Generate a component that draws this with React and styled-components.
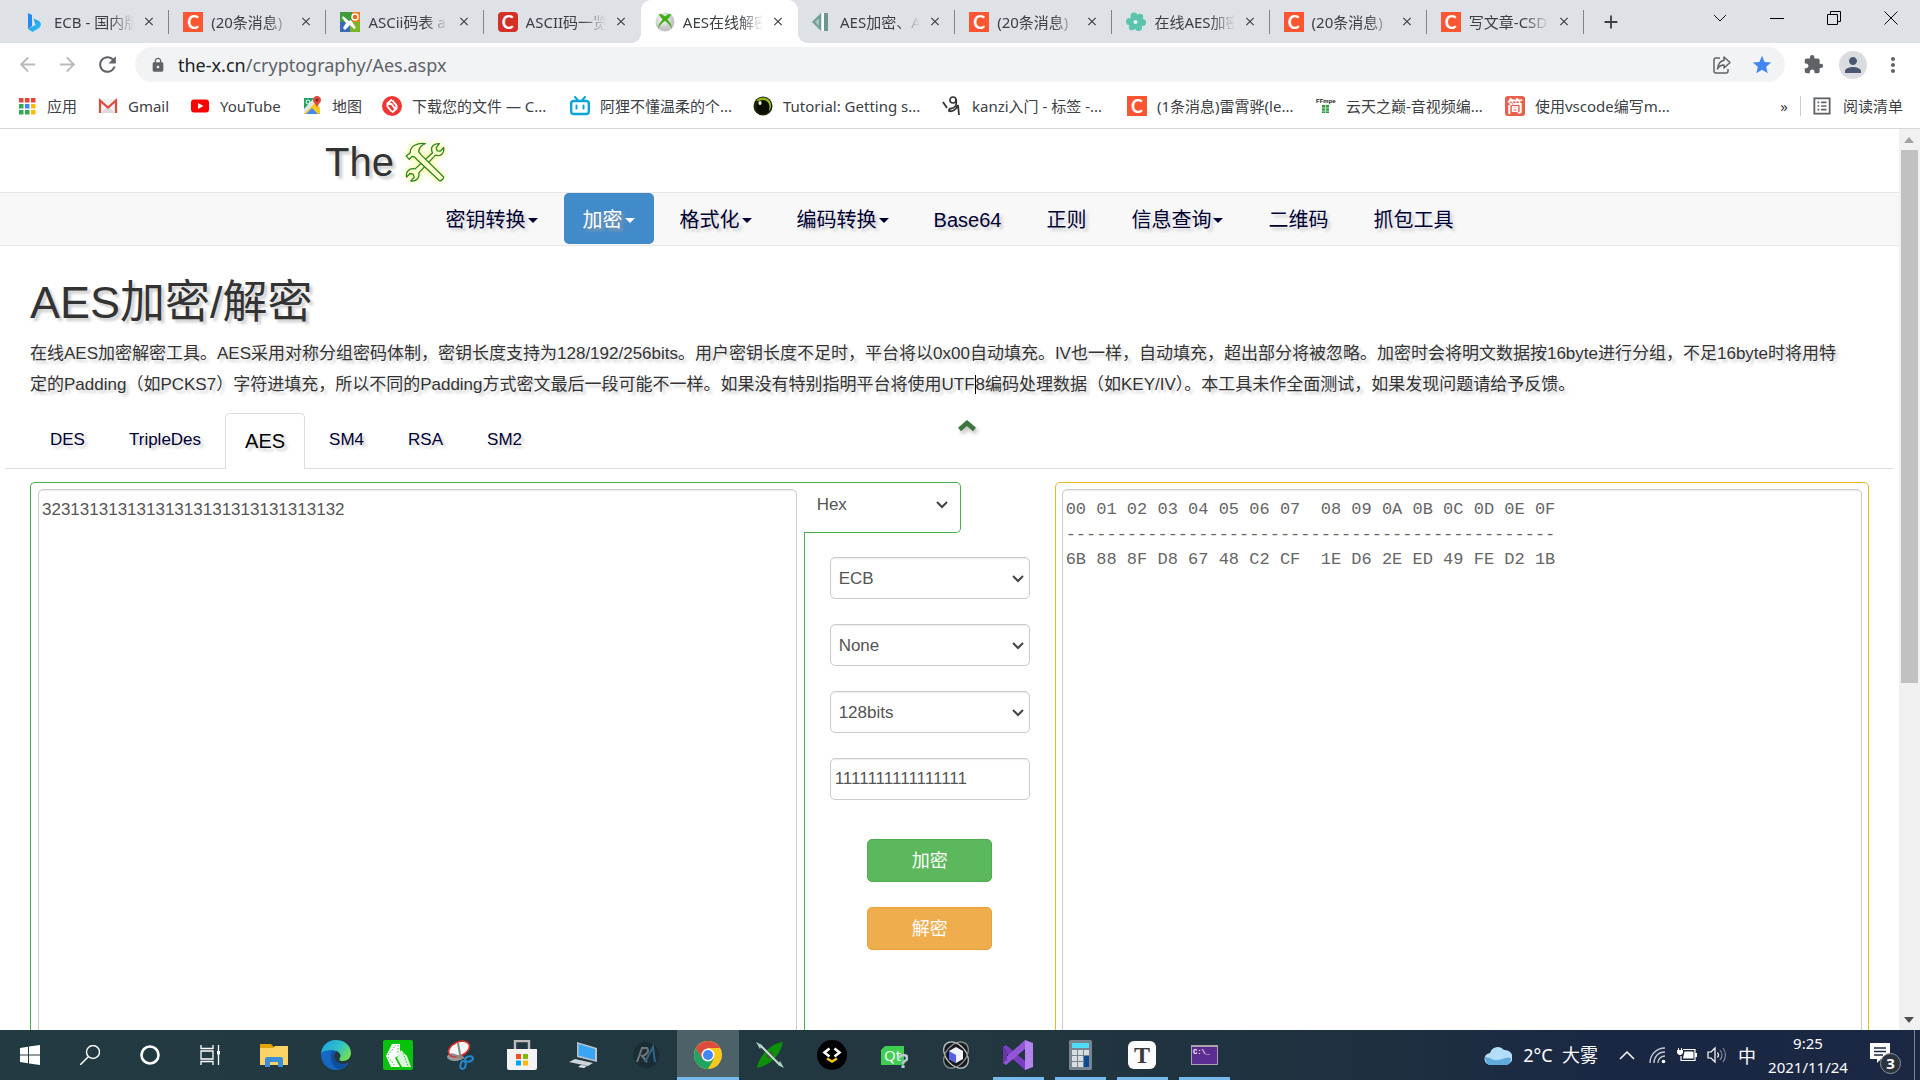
import React from 'react';
import styled, { createGlobalStyle, css } from 'styled-components';
import {
  MdArrowBack,
  MdArrowForward,
  MdRefresh,
  MdLock,
  MdStar,
  MdExtension,
  MdPerson,
  MdMoreVert,
  MdClose,
  MdAdd,
} from 'react-icons/md';

const uiFont = "'Noto Sans', 'Noto Sans CJK SC', sans-serif";
const pageFont = "'Liberation Sans', 'Noto Sans CJK SC', sans-serif";
const monoFont = "'Liberation Mono', 'Noto Sans CJK SC', monospace";
const textShadow = '3px 3px 3px #ccc';

const GlobalStyle = createGlobalStyle`
  * {
    box-sizing: border-box;
  }

  body {
    margin: 0;
    overflow: hidden;
    background: #fff;
  }

  button, input, select, textarea {
    font-family: inherit;
  }
`;

const Desktop = styled.div`
  display: flex;
  flex-direction: column;
  height: 100vh;
  font-family: ${uiFont};
`;

/* ---------- browser chrome ---------- */

const TabStrip = styled.div`
  display: flex;
  flex-shrink: 0;
  height: 43px;
  padding-left: 12px;
  background: #dee1e6;
`;

const BrowserTabs = styled.div`
  display: grid;
  grid-template-columns: repeat(10, 1fr);
  flex: 0 1 1572px;
  min-width: 0;
`;

const BrowserTab = styled.div`
  position: relative;
  display: flex;
  align-items: center;
  min-width: 0;
  padding: 0 13px 0 14px;
  gap: 8px;

  ${({ $divider }) => $divider && css`
    &::after {
      content: '';
      position: absolute;
      right: 0;
      top: 10px;
      width: 1px;
      height: 24px;
      background: #808387;
    }
  `}

  ${({ $active }) => $active && css`
    background: #fff;
    border-radius: 10px 10px 0 0;

    &::before, &::after {
      content: '';
      position: absolute;
      bottom: 0;
      width: 10px;
      height: 10px;
    }
    &::before {
      left: -10px;
      background: radial-gradient(circle at 0 0, transparent 10px, #fff 10px);
    }
    &::after {
      right: -10px;
      background: radial-gradient(circle at 100% 0, transparent 10px, #fff 10px);
    }
  `}
`;

const TabTitle = styled.span`
  flex: 1;
  min-width: 0;
  overflow: hidden;
  white-space: nowrap;
  font-size: 15px;
  line-height: 24px;
  color: #3c4043;
  mask-image: linear-gradient(to right, #000 70%, transparent 100%);
`;

const IconButton = styled.button`
  display: flex;
  align-items: center;
  justify-content: center;
  flex-shrink: 0;
  width: ${({ $width }) => $width || 40}px;
  height: ${({ $height }) => $height || 36}px;
  padding: 0;
  border: 0;
  background: none;
  color: ${({ $color }) => $color || '#5f6368'};
`;

const WindowControls = styled.div`
  display: flex;
  margin-left: auto;
  padding-right: 1px;
`;

const LetterIcon = styled.span`
  display: flex;
  align-items: center;
  justify-content: center;
  flex-shrink: 0;
  width: 20px;
  height: 20px;
  border-radius: ${({ $radius }) => $radius || 0}px;
  background: ${({ $bg }) => $bg || '#fc5531'};
  color: #fff;
  font-family: 'Lato', 'Noto Sans CJK SC', sans-serif;
  font-size: ${({ $size }) => $size || 18}px;
  font-weight: 700;
  line-height: 20px;
`;

const Toolbar = styled.div`
  display: flex;
  align-items: center;
  flex-shrink: 0;
  height: 43px;
  padding: 0 7px 0 7px;
`;

const AddressBar = styled.div`
  display: flex;
  align-items: center;
  flex: 1;
  height: 35px;
  margin: 0 8px 0 8px;
  padding: 0 3px 0 15px;
  border-radius: 18px;
  background: #f1f3f4;
`;

const Url = styled.span`
  flex: 1;
  margin-left: 12px;
  font-size: 18px;
  line-height: 24px;
  color: #5f6368;

  b {
    font-weight: 400;
    color: #202124;
  }
`;

const Avatar = styled.span`
  display: flex;
  align-items: center;
  justify-content: center;
  width: 28px;
  height: 28px;
  border-radius: 50%;
  background: #dadce0;
  color: #4a5872;
`;

const BookmarkBar = styled.div`
  display: flex;
  align-items: center;
  flex-shrink: 0;
  height: 43px;
  padding: 0 17px 2px 17px;
  border-bottom: 1px solid #d5d7da;
`;

const Bookmark = styled.a`
  display: flex;
  align-items: center;
  gap: 10px;
  margin-right: 21px;
  font-size: 15px;
  line-height: 24px;
  color: #3c4043;
  text-decoration: none;
  white-space: nowrap;

  span.label {
    width: ${({ $width }) => $width}px;
  }
`;

const ReadingList = styled.div`
  display: flex;
  align-items: center;
  margin-left: auto;
  gap: 12px;
  font-size: 15px;
  line-height: 24px;
  color: #3c4043;

  i {
    width: 1px;
    height: 20px;
    background: #c9ccd1;
  }
`;

/* ---------- web page ---------- */

const Viewport = styled.div`
  display: flex;
  flex: 1;
  min-height: 0;
`;

const Page = styled.main`
  flex: 1;
  min-width: 0;
  overflow: hidden;
  background: #fff;
  color: #333;
  font-family: ${pageFont};
  font-size: 17px;
`;

const Scrollbar = styled.div`
  display: flex;
  flex-direction: column;
  align-items: center;
  justify-content: space-between;
  width: 21px;
  padding-right: 1px;
  background: #f1f1f1;
`;

const ScrollTrack = styled.div`
  flex: 1;
  width: 17px;
`;

const ScrollThumb = styled.div`
  height: 62%;
  background: #c1c1c1;
`;

const ScrollArrow = styled.div`
  display: flex;
  align-items: center;
  justify-content: center;
  height: 21px;
`;

const Brand = styled.header`
  display: flex;
  align-items: center;
  gap: 10px;
  height: 63px;
  padding: 2px 0 0 325px;
  font-size: 40px;
  line-height: 46px;
  text-shadow: ${textShadow};
`;

const NavBar = styled.nav`
  display: flex;
  justify-content: center;
  gap: 7px;
  height: 54px;
  border: solid #e7e7e7;
  border-width: 1px 0;
  background: #f8f8f8;
`;

const NavLink = styled.a`
  display: flex;
  align-items: center;
  gap: 2px;
  height: 51px;
  padding: 2px 19px 0;
  border-radius: 5px;
  background: ${({ $active }) => ($active ? '#428bca' : 'transparent')};
  color: ${({ $active }) => ($active ? '#fff' : '#000033')};
  font-size: 20px;
  line-height: 28px;
  text-decoration: none;
  text-shadow: ${({ $active }) => ($active ? '3px 3px 3px #8a9aa8' : textShadow)};
`;

const Caret = styled.span`
  margin-top: 2px;
  border-top: 5px solid;
  border-left: 5px solid transparent;
  border-right: 5px solid transparent;
`;

const Intro = styled.section`
  padding: 32px 60px 0 30px;
  text-shadow: ${textShadow};

  h1 {
    margin: 0;
    font-size: 45px;
    font-weight: 400;
    line-height: 50px;
  }

  p {
    margin: 10px 0 0;
    line-height: 31px;
  }
`;

const TextCursor = styled.span`
  border-left: 1px solid #000;
`;

const CipherTabs = styled.div`
  display: flex;
  gap: 4px;
  margin: 13px 6px 0 5px;
  padding-left: 25px;
  border-bottom: 1px solid #ddd;
`;

const CipherTab = styled.a`
  height: 56px;
  margin-bottom: -1px;
  padding: 0 19px;
  border: 1px solid ${({ $active }) => ($active ? '#ddd' : 'transparent')};
  border-bottom: 0;
  border-radius: 5px 5px 0 0;
  background: ${({ $active }) => ($active ? '#fff' : 'transparent')};
  color: ${({ $active }) => ($active ? '#000' : '#000033')};
  font-size: ${({ $active }) => ($active ? 20 : 17)}px;
  line-height: ${({ $active }) => ($active ? 54 : 52)}px;
  text-decoration: none;
  text-shadow: ${textShadow};
`;

const CollapseButton = styled.button`
  height: 28px;
  margin-left: 412px;
  padding: 0;
  border: 0;
  background: none;
  filter: drop-shadow(2px 3px 2px #bbb);
`;

const Workspace = styled.section`
  display: grid;
  grid-template-columns: 19fr 251px 20fr;
  min-height: 620px;
  margin: 13px 30px 0 30px;
`;

const InputPanel = styled.div`
  display: flex;
  padding: 6px 7px 6px 7px;
  border: solid #4cae4c;
  border-width: 1px 0 1px 1px;
  border-radius: 5px 0 0 5px;
`;

const OutputPanel = styled.div`
  display: flex;
  padding: 6px;
  border: 1px solid #e6bb1a;
  border-radius: 5px;
`;

const TextArea = styled.textarea`
  flex: 1;
  min-width: 0;
  padding: 7px 3px;
  resize: none;
  outline: 0;
  border: 1px solid #ccc;
  border-radius: 5px;
  box-shadow: inset 0 1px 1px rgba(0, 0, 0, 0.08);
  background: #fff;
  color: ${({ $mono }) => ($mono ? '#666' : '#555')};
  font-family: ${({ $mono }) => ($mono ? monoFont : pageFont)};
  font-size: 17px;
  line-height: 25px;
`;

const Options = styled.div`
  display: flex;
  flex-direction: column;
`;

const FormatBox = styled.div`
  width: 157px;
  height: 51px;
  border: solid #4cae4c;
  border-width: 1px 1px 1px 0;
  border-radius: 0 5px 5px 0;
`;

const OptionList = styled.div`
  display: flex;
  flex: 1;
  flex-direction: column;
  gap: 25px;
  padding: 24px 25px;
  border-left: 1px solid #4cae4c;
`;

const SelectWrap = styled.div`
  position: relative;

  svg {
    position: absolute;
    top: 18px;
    right: ${({ $bare }) => ($bare ? 12 : 6)}px;
    pointer-events: none;
  }
`;

const fieldBox = css`
  display: block;
  width: 100%;
  height: 42px;
  border: 1px solid #ccc;
  border-radius: 5px;
  box-shadow: inset 0 1px 1px rgba(0, 0, 0, 0.08);
  outline: 0;
  background: #fff;
  color: #555;
  font-size: 17px;
`;

const Select = styled.select`
  ${fieldBox}
  appearance: none;
  padding: 0 8px;

  ${({ $bare }) => $bare && css`
    padding: 0 13px;
    border: 0;
    box-shadow: none;
    background: transparent;
  `}
`;

const KeyInput = styled.input`
  ${fieldBox}
  padding: 0 4px;
`;

const Actions = styled.div`
  display: flex;
  flex-direction: column;
  align-items: center;
  gap: 25px;
  padding-top: 14px;
`;

const ActionButton = styled.button`
  width: 125px;
  height: 43px;
  padding: 0 0 3px;
  border: 1px solid ${({ $border }) => $border};
  border-radius: 5px;
  background: ${({ $bg }) => $bg};
  color: #fff;
  font-size: 18px;
`;

/* ---------- taskbar ---------- */

const Taskbar = styled.footer`
  display: flex;
  flex-shrink: 0;
  height: 50px;
  background: linear-gradient(to right, #223a42 0%, #22373f 50%, #1e3040 72%, #1a2743 84%, #1b2844 100%);
  color: #fff;
`;

const TaskGroup = styled.div`
  display: flex;
  margin-right: 3px;
`;

const TaskButton = styled.button`
  display: flex;
  align-items: center;
  justify-content: center;
  width: ${({ $width }) => $width || 62}px;
  height: 50px;
  padding: 0;
  border: 0;
  background: ${({ $active }) => ($active ? '#4d6168' : 'none')};
  ${({ $active, $open }) => ($active || $open) && css`
    background-image: linear-gradient(#76b9ed, #76b9ed);
    background-size: ${$active ? '100%' : '51px'} 3px;
    background-position: bottom center;
    background-repeat: no-repeat;
  `}
`;

const Tray = styled.div`
  display: flex;
  align-items: center;
  margin-left: auto;
`;

const Weather = styled.div`
  display: flex;
  align-items: center;
  gap: 11px;
  margin-right: 14px;
  font-size: 18px;
  line-height: 24px;
`;

const TrayIcon = styled.span`
  display: flex;
  align-items: center;
  justify-content: center;
  width: 30px;
  font-size: 18px;
`;

const Clock = styled.div`
  display: flex;
  flex-direction: column;
  align-items: center;
  width: 92px;
  font-size: 15px;
  line-height: 24px;
`;

const Notifications = styled.div`
  position: relative;
  width: 45px;
  height: 24px;
  padding-left: 16px;
  margin-right: 15px;
`;

const Badge = styled.span`
  position: absolute;
  top: 10px;
  left: 26px;
  width: 21px;
  height: 21px;
  border: 1px solid #8c929c;
  border-radius: 50%;
  background: #2c333d;
  font-size: 15px;
  font-weight: 700;
  line-height: 19px;
  text-align: center;
`;

const ShowDesktop = styled.div`
  width: 6px;
  height: 50px;
  border-left: 1px solid #7a8496;
`;

/* ---------- small drawings ---------- */

const Svg = ({ s = 20, w, h, box = '0 0 20 20', children }) => (
  <svg width={w || s} height={h || s} viewBox={box} fill="none" aria-hidden="true">
    {children}
  </svg>
);

const BingIcon = () => (
  <Svg>
    <defs>
      <linearGradient id="bing" x1="0" y1="0" x2="1" y2="1">
        <stop offset="0" stopColor="#2a8cf0" />
        <stop offset="1" stopColor="#28c8e8" />
      </linearGradient>
    </defs>
    <path d="M2 1l4 2v11l-4 3z" fill="#2389f2" />
    <path d="M7.500 6.500l5 2.300c3 1.600 3 5.700.3 7.400L6.500 20 2 17l7.500-4z" fill="url(#bing)" />
  </Svg>
);

const PuzzleManIcon = () => (
  <Svg>
    <path d="M0 0h12v10H0z" fill="#3f9b3c" />
    <path d="M12 0h8v10h-8z" fill="#ef7d1a" />
    <path d="M0 10h10v10H0z" fill="#3c6ab4" />
    <path d="M10 10h10v10H10z" fill="#79b528" />
    <path d="M3 4l6 5 2-1 5 8-2 1-4-4-5 5-2-2 3-5-4-5z" fill="#fff" />
    <circle cx="15" cy="5" r="3" fill="#e96a12" stroke="#fff" strokeWidth="1.500" />
  </Svg>
);

const XboxIcon = () => (
  <Svg>
    <defs>
      <radialGradient id="ball" cx=".4" cy=".35">
        <stop offset="0" stopColor="#fff" />
        <stop offset="1" stopColor="#c4c4c4" />
      </radialGradient>
    </defs>
    <circle cx="10" cy="10" r="9.500" fill="url(#ball)" />
    <path d="M3.500 2C7 1.500 9 3.500 10 4.500c1-1 3-3 6.500-2.500C15 4 14 6 12.500 7.500c2.500 3 4.500 6 4.500 9.500-1.500-3.500-4-6-7-8-3 2-5.500 4.500-7 8 0-3.500 2-6.500 4.500-9.500C6 6 5 4 3.500 2z" fill="#3fae17" />
  </Svg>
);

const MirrorIcon = () => (
  <Svg>
    <path d="M9 1v18L0 10z" fill="#6f9e94" />
    <path d="M7 6v8l-4-4z" fill="#a9c6bf" />
    <path d="M10 1h2v18h-2z" fill="#fff" />
    <path d="M12 1h4v18h-4z" fill="#6b978e" />
  </Svg>
);

const FlowerIcon = () => (
  <Svg>
    <g fill="#5cc3ac">
      <circle cx="8" cy="4" r="3.500" />
      <circle cx="14" cy="5" r="3.200" />
      <circle cx="16.500" cy="10.500" r="3.500" />
      <circle cx="12.500" cy="15.500" r="3.500" />
      <circle cx="6" cy="15" r="3.200" />
      <circle cx="3.500" cy="9.500" r="3.500" />
      <circle cx="10" cy="10" r="6" />
    </g>
    <circle cx="9.500" cy="10" r="2" fill="#e2f4f0" />
  </Svg>
);

const AppsIcon = () => (
  <Svg>
    {['#ea4335', '#ea4335', '#ea4335', '#34a853', '#4285f4', '#fbbc04', '#34a853', '#34a853', '#fbbc04'].map((c, i) => (
      <rect key={i} x={2 + (i % 3) * 6} y={2 + Math.floor(i / 3) * 6} width="4.500" height="4.500" fill={c} />
    ))}
  </Svg>
);

const GmailIcon = () => (
  <Svg>
    <path d="M1 3h18v14H1z" fill="#f2f2f2" />
    <path d="M3 17l7-7 7 7z" fill="#dcdcdc" />
    <path d="M2 17V4.500l8 7 8-7V17" stroke="#dd4b3e" strokeWidth="2.200" />
  </Svg>
);

const YouTubeIcon = () => (
  <Svg>
    <rect x="1" y="3.500" width="18" height="13" rx="3" fill="#f00" />
    <path d="M8 7l5.500 3L8 13z" fill="#fff" />
  </Svg>
);

const MapIcon = () => (
  <Svg>
    <path d="M2 2h11l5 8v8H2z" fill="#e4e4e4" />
    <path d="M2 2h10L2 13z" fill="#1fa463" />
    <path d="M2 18L13 7l5 5v6h-3l-5-5-5 5z" fill="#fbc91d" />
    <path d="M4 18l6-6 6 6z" fill="#4688f1" />
    <path d="M15 0c-2.500 0-4 1.800-4 4 0 3 3.500 4 4 8 .5-4 4-5 4-8 0-2.200-1.500-4-4-4z" fill="#dd4b3e" />
    <circle cx="15" cy="4" r="1.500" fill="#80261e" />
    <circle cx="6" cy="6" r="2" stroke="#fff" />
  </Svg>
);

const SwirlIcon = () => (
  <Svg>
    <circle cx="10" cy="10" r="10" fill="#f03535" />
    <path d="M10 3.500L5.500 7.500v3l4 5M10 16.500l4.500-4v-3l-4-5" stroke="#fff" strokeWidth="2" />
    <path d="M5.500 8h4l3 4h2" stroke="#fff" strokeWidth="2" />
  </Svg>
);

const BiliIcon = () => (
  <Svg>
    <path d="M5 1l3 3.500M15 1l-3 3.500" stroke="#09a5dd" strokeWidth="2" strokeLinecap="round" />
    <rect x="1.200" y="5" width="17.600" height="13" rx="2.500" stroke="#09a5dd" strokeWidth="2.400" />
    <path d="M6.500 9.500v3M13.500 9.500v3" stroke="#09a5dd" strokeWidth="2" strokeLinecap="round" />
  </Svg>
);

const EyeBallIcon = () => (
  <Svg>
    <circle cx="10" cy="10" r="9.500" fill="#1a2208" />
    <path d="M3 5c4-5 11-4 14 0 2 4 1 8-1 10 0-6-5-11-13-10z" fill="#93b51f" />
    <ellipse cx="10" cy="11" rx="6.500" ry="7" fill="#0a0d04" />
    <ellipse cx="7" cy="7" rx="1.600" ry="2" fill="#e8f0c8" />
  </Svg>
);

const KanziIcon = () => (
  <Svg>
    <circle cx="11" cy="4" r="3" stroke="#333" strokeWidth="1.600" />
    <path d="M14 3c1 5 0 8-3 9-3 1-4 0-4 3 3 1 7-1 9-6l1 10M1 6l4 6" stroke="#333" strokeWidth="1.800" />
  </Svg>
);

const FfmpegIcon = () => (
  <Svg>
    <text x="0" y="7" fontSize="6" fontWeight="700" fill="#222" fontFamily="Liberation Sans">FFmpeg</text>
    <path d="M6 9h7v8H6z" fill="#2f9a3c" />
    <path d="M6 12h7M9.500 9v8M6 15h7" stroke="#bfe3c3" />
  </Svg>
);

const ReadingIcon = () => (
  <Svg s={18}>
    <rect x="1.500" y="1.500" width="17" height="17" stroke="#5f6368" strokeWidth="2" />
    <path d="M5 6h2M9 6h6M5 10h2M9 10h6M5 14h2M9 14h6" stroke="#5f6368" strokeWidth="1.800" />
  </Svg>
);

const ShareIcon = () => (
  <Svg>
    <path d="M8 3H4a2 2 0 0 0-2 2v11a2 2 0 0 0 2 2h10a2 2 0 0 0 2-2v-2" stroke="#5f6368" strokeWidth="1.500" />
    <path d="M12 2l6 5.500-6 5.500v-3c-3 0-5 1-6.500 4C6 9 8 6 12 5.200z" stroke="#5f6368" strokeWidth="1.500" strokeLinejoin="round" />
  </Svg>
);

const GlowSvg = styled.svg`
  filter: drop-shadow(0 0 3px rgba(240, 240, 60, 0.7));
`;

const ToolsLogo = () => (
  <GlowSvg
    width="42"
    height="42"
    viewBox="40 22 128 126"
    fill="#fdfdd0"
    stroke="#2e8520"
    strokeWidth="4"
    strokeLinejoin="round"
    aria-hidden="true"
  >
    <path d="M74 106L127 57C119 42 127 29 148 29L138 41l3 10 10 1 10-11c3 18-10 28-25 23L85 118c3 15-7 27-24 25l10-12-3-9-10-2-10 11c-4-17 9-29 26-25z" />
    <path d="M47 67l12-10c-1-20 22-32 46-28-13 5-20 14-20 25l8 10 67 66c3 4-7 14-12 12L81 79l-9-9-8-2-8 9z" />
  </GlowSvg>
);

const Chevron = () => (
  <Svg w={12} h={8} box="0 0 12 8">
    <path d="M1 1l5 5 5-5" stroke="#444" strokeWidth="2" />
  </Svg>
);

const WindowsIcon = () => (
  <Svg>
    <path d="M0 3l8-1.200V9.500H0zM9 1.600L20 0v9.500H9zM0 10.500h8v7.700L0 17zM9 10.500h11V20L9 18.400z" fill="#fff" />
  </Svg>
);

const SearchIcon = () => (
  <Svg>
    <circle cx="13" cy="7" r="6.500" stroke="#fff" strokeWidth="1.400" />
    <path d="M8.500 11.500L0 20" stroke="#fff" strokeWidth="1.500" />
  </Svg>
);

const CortanaIcon = () => (
  <Svg>
    <circle cx="10" cy="10" r="8.500" stroke="#fff" strokeWidth="2.600" />
  </Svg>
);

const TaskViewIcon = () => (
  <Svg>
    <path d="M1 0v3.500h12V0M1 20v-3.500h12V20M1 6h12v8H1zM18.500 0v20" stroke="#fff" strokeWidth="1.300" />
    <path d="M17 6h3v3.500h-3z" fill="#fff" />
  </Svg>
);

const FolderIcon = () => (
  <Svg w={28} h={28} box="0 0 28 28">
    <path d="M0 3h11l3 3v4H0z" fill="#e3a300" />
    <path d="M0 7h13l2-2h13v19H0z" fill="#fdd365" />
    <path d="M5 26V18q0-2 2-2h14q2 0 2 2v8h-5v-5h-8v5z" fill="#3b8fd8" />
  </Svg>
);

const EdgeIcon = () => (
  <Svg w={30} h={30} box="0 0 30 30">
    <defs>
      <linearGradient id="edge" x1="0" y1="0" x2="1" y2=".6">
        <stop offset="0" stopColor="#1b9de2" />
        <stop offset=".6" stopColor="#2fc2c8" />
        <stop offset="1" stopColor="#6fdf57" />
      </linearGradient>
    </defs>
    <path d="M15 0C7 0 1 6 0 13c-1 8 5 17 15 17 6 0 10-3 13-7-7 3-15 0-15-7 0-3 2-5 4-5z" fill="#1668c2" />
    <path d="M0 14C1 5 7 0 15 0c9 0 15 6 15 13 0 5-4 8-8 8-4 0-4-2-3-3 2-4-2-8-8-8-5 0-10 1-11 4z" fill="url(#edge)" />
    <path d="M11 11c-3 6-1 16 7 18 4 0 8-3 10-6-7 3-15 0-15-7 0-3 1-4 2-5z" fill="#0f4f9c" />
  </Svg>
);

const FilmIcon = () => (
  <Svg w={30} h={30} box="0 0 30 30">
    <rect width="30" height="30" rx="2" fill="#06c20a" />
    <path d="M9 4h8v10l-5 4 5 9h-9L3 16z" fill="#fff" />
    <path d="M18 10l6 6 4 11h-9l-5-9z" fill="#d9f5da" />
    <path d="M5 15l8-10M5 17l7 9M15 5v9M20 13l5 13" stroke="#39b43c" strokeDasharray="1.500 1.500" />
  </Svg>
);

const SnipIcon = () => (
  <Svg w={30} h={30} box="0 0 30 30">
    <ellipse cx="10" cy="17" rx="8" ry="4" fill="#999" />
    <ellipse cx="14" cy="9" rx="11" ry="7" transform="rotate(-25 14 9)" fill="#f6f6f6" stroke="#d8322c" strokeWidth="1.600" />
    <path d="M13 3l3 17M6 14l13 4" stroke="#888" strokeWidth="2" />
    <ellipse cx="24" cy="19" rx="4" ry="2.500" transform="rotate(-15 24 19)" stroke="#2686d0" strokeWidth="2" />
    <ellipse cx="18" cy="25" rx="2.500" ry="4" transform="rotate(15 18 25)" stroke="#2686d0" strokeWidth="2" />
  </Svg>
);

const StoreIcon = () => (
  <Svg w={30} h={30} box="0 0 30 30">
    <path d="M8 11V1h14v10" stroke="#bdbdbd" strokeWidth="2.400" />
    <path d="M0 9h30v19q0 2-2 2H2q-2 0-2-2z" fill="#f3f3f3" />
    <path d="M9 14h5v5H9z" fill="#f25022" />
    <path d="M16 14h5v5h-5z" fill="#7fba00" />
    <path d="M9 20.500h5v5H9z" fill="#00a4ef" />
    <path d="M16 20.500h5v5h-5z" fill="#ffb900" />
  </Svg>
);

const ComputerIcon = () => (
  <Svg w={30} h={28} box="0 0 30 28">
    <path d="M8 1l20 6v14L8 16z" fill="#b8c4cc" />
    <path d="M9.500 3L26 8v11L9.500 14.500z" fill="#3aa5f5" />
    <path d="M6 18l18 4-5 3L0 21z" fill="#cfd5d9" />
    <path d="M12 24l6 1-3 2-6-1z" fill="#e3e6e8" />
  </Svg>
);

const RxIcon = () => (
  <Svg w={30} h={30} box="0 0 30 30">
    <circle cx="15" cy="15" r="13" fill="#1c2c34" />
    <path d="M6 22L11 8h5q3 3-2 7l-3 1 5 6" stroke="#6e7679" strokeWidth="2" />
    <path d="M14 22l8-15 2 15" stroke="#30648c" strokeWidth="2" />
  </Svg>
);

const ChromeIcon = () => (
  <Svg w={28} h={28} box="0 0 28 28">
    <circle cx="14" cy="14" r="14" fill="#fbc91d" />
    <path d="M1.900 7a14 14 0 0 1 24.200 0H14L8 18z" fill="#dd4b3e" />
    <path d="M1.900 7a14 14 0 0 0 12.100 21l6-10.500L8 17.500z" fill="#1fa463" />
    <circle cx="14" cy="14" r="6.500" fill="#fff" />
    <circle cx="14" cy="14" r="5" fill="#4285f4" />
  </Svg>
);

const KayakIcon = () => (
  <Svg w={28} h={28} box="0 0 28 28">
    <path d="M27 1C17 2 4 12 1 27 12 25 24 16 27 1z" fill="#0c9208" />
    <circle cx="14" cy="14" r="3.500" fill="#3a5a3a" />
    <path d="M4 4l20 20" stroke="#c9d8d2" strokeWidth="2" />
    <path d="M0 1l6 3-2 4zM28 27l-6-3 2-4z" fill="#a8d5c2" />
  </Svg>
);

const CodeIcon = () => (
  <Svg w={30} h={30} box="0 0 30 30">
    <circle cx="15" cy="15" r="15" fill="#000" />
    <path d="M12.500 8.500l-5 4 5 4M17.500 8.500l5 4-5 4" stroke="#fff" strokeWidth="2.600" />
    <path d="M10 18.500l5 3 5-3" stroke="#f3c518" strokeWidth="2.600" />
  </Svg>
);

const QtIcon = () => (
  <Svg w={28} h={28} box="0 0 28 28">
    <path d="M5 5h19v19H1V9z" fill="#41cd52" />
    <text x="4" y="20" fontSize="15" fill="#fff" fontFamily="Open Sans">Qt</text>
    <text x="17" y="27" fontSize="21" fontWeight="700" fill="#b9cdd8" fontFamily="Liberation Sans">?</text>
  </Svg>
);

const CubeIcon = () => (
  <Svg w={30} h={30} box="0 0 30 30">
    <circle cx="15" cy="15" r="13" fill="#15191d" />
    <ellipse cx="15" cy="15" rx="15" ry="10" transform="rotate(50 15 15)" stroke="#c8c8c8" strokeWidth="1.200" />
    <ellipse cx="15" cy="15" rx="15" ry="10" transform="rotate(-50 15 15)" stroke="#909090" strokeWidth="1.200" />
    <path d="M15 7l7 4v8l-7 4-7-4v-8z" fill="#f3f3ff" />
    <path d="M8 11l7 4v8l-7-4z" fill="#5661e8" />
  </Svg>
);

const VisualStudioIcon = () => (
  <Svg w={30} h={30} box="0 0 30 30">
    <path d="M22 0l8 3v24l-8 3z" fill="#b583ee" />
    <path d="M0 7l3-2 19 16v9L0 10z" fill="#7a3fc0" />
    <path d="M0 23l3 2L22 9V0L0 20z" fill="#9356d8" />
    <path d="M0 7l4 3v10l-4 3z" fill="#6a35a8" />
  </Svg>
);

const CalculatorIcon = () => (
  <Svg w={23} h={30} box="0 0 23 30">
    <rect width="23" height="30" rx="1.500" fill="#788490" />
    <path d="M3 3h17v5H3z" fill="#4ddcf7" />
    <path d="M3 10h5v5H3zM9 10h5v5H9zM15 10h5v5h-5zM3 16h5v5H3zM9 16h5v5H9zM3 22h5v5H3zM9 22h5v5H9z" fill="#d8dde2" />
    <path d="M15 16h5v11h-5z" fill="#0c4a94" />
  </Svg>
);

const TyporaIcon = () => (
  <Svg w={28} h={28} box="0 0 28 28">
    <rect width="28" height="28" rx="6" fill="#fcfcfc" />
    <text x="14" y="22" fontSize="24" fontWeight="700" textAnchor="middle" fill="#3a3a3a" fontFamily="Liberation Serif">T</text>
  </Svg>
);

const ConsoleIcon = () => (
  <Svg w={27} h={20} box="0 0 27 20">
    <path d="M0 0h27v20H0z" fill="#a9a3b0" />
    <path d="M1 2h25v17H1z" fill="#5c2d91" />
    <text x="2" y="9" fontSize="7" fontWeight="700" fill="#fff" fontFamily="Liberation Mono">C:\_</text>
  </Svg>
);

const CloudIcon = () => (
  <Svg w={28} h={22} box="0 0 28 22">
    <path d="M7 21a6 6 0 0 1-1-12A8 8 0 0 1 20 6a7.500 7.500 0 0 1 2 15z" fill="#b3defa" />
    <path d="M1 13c5 0 8 4 13 3 4 0 8-4 13-2 0 4-2 7-5 7H7c-3 0-6-3-6-8z" fill="#5fa9dd" />
  </Svg>
);

/* ---------- data ---------- */

const csdn = <LetterIcon>C</LetterIcon>;

const browserTabs = [
  { icon: <BingIcon />, title: 'ECB - 国内版', divider: true },
  { icon: csdn, title: '(20条消息)', divider: true },
  { icon: <PuzzleManIcon />, title: 'ASCii码表 a', divider: true },
  { icon: <LetterIcon $bg="#d33128" $radius={4}>C</LetterIcon>, title: 'ASCII码一览' },
  { icon: <XboxIcon />, title: 'AES在线解密', active: true },
  { icon: <MirrorIcon />, title: 'AES加密、A', divider: true },
  { icon: csdn, title: '(20条消息)', divider: true },
  { icon: <FlowerIcon />, title: '在线AES加密', divider: true },
  { icon: csdn, title: '(20条消息)', divider: true },
  { icon: csdn, title: '写文章-CSD', divider: true },
];

const bookmarks = [
  { icon: <AppsIcon />, label: '应用', width: 30 },
  { icon: <GmailIcon />, label: 'Gmail', width: 41 },
  { icon: <YouTubeIcon />, label: 'YouTube', width: 61 },
  { icon: <MapIcon />, label: '地图', width: 29 },
  { icon: <SwirlIcon />, label: '下载您的文件 — C...', width: 137 },
  { icon: <BiliIcon />, label: '阿狸不懂温柔的个...', width: 132 },
  { icon: <EyeBallIcon />, label: 'Tutorial: Getting s...', width: 138 },
  { icon: <KanziIcon />, label: 'kanzi入门 - 标签 -...', width: 134 },
  { icon: csdn, label: '(1条消息)雷霄骅(le...', width: 138 },
  { icon: <FfmpegIcon />, label: '云天之巅-音视频编...', width: 138 },
  { icon: <LetterIcon $bg="#e8604a" $radius={3} $size={16}>简</LetterIcon>, label: '使用vscode编写m...', width: 137 },
];

const navItems = [
  { label: '密钥转换', menu: true },
  { label: '加密', menu: true, active: true },
  { label: '格式化', menu: true },
  { label: '编码转换', menu: true },
  { label: 'Base64' },
  { label: '正则' },
  { label: '信息查询', menu: true },
  { label: '二维码' },
  { label: '抓包工具' },
];

const ciphers = ['DES', 'TripleDes', 'AES', 'SM4', 'RSA', 'SM2'];

const selects = [
  { name: '模式', value: 'ECB' },
  { name: '填充', value: 'None' },
  { name: '密钥长度', value: '128bits' },
];

const output = [
  '00 01 02 03 04 05 06 07  08 09 0A 0B 0C 0D 0E 0F',
  '-'.repeat(48),
  '6B 88 8F D8 67 48 C2 CF  1E D6 2E ED 49 FE D2 1B',
].join('\n');

const systemButtons = [
  { name: '开始', icon: <WindowsIcon /> },
  { name: '搜索', icon: <SearchIcon /> },
  { name: 'Cortana', icon: <CortanaIcon /> },
  { name: '任务视图', icon: <TaskViewIcon /> },
];

const apps = [
  { name: '文件资源管理器', icon: <FolderIcon /> },
  { name: 'Edge', icon: <EdgeIcon /> },
  { name: 'Film', icon: <FilmIcon /> },
  { name: '截图工具', icon: <SnipIcon /> },
  { name: 'Store', icon: <StoreIcon /> },
  { name: '远程桌面', icon: <ComputerIcon /> },
  { name: 'RX', icon: <RxIcon /> },
  { name: 'Chrome', icon: <ChromeIcon />, active: true },
  { name: 'Kayak', icon: <KayakIcon /> },
  { name: 'Code', icon: <CodeIcon /> },
  { name: 'Qt', icon: <QtIcon /> },
  { name: 'Cube', icon: <CubeIcon /> },
  { name: 'Visual Studio', icon: <VisualStudioIcon />, open: true },
  { name: '计算器', icon: <CalculatorIcon />, open: true },
  { name: 'Typora', icon: <TyporaIcon />, open: true },
  { name: '命令提示符', icon: <ConsoleIcon />, open: true },
];

/* ---------- sections ---------- */

const BrowserHeader = () => (
  <>
    <TabStrip>
      <BrowserTabs>
        {browserTabs.map((tab, i) => (
          <BrowserTab key={i} $active={tab.active} $divider={tab.divider}>
            {tab.icon}
            <TabTitle>{tab.title}</TabTitle>
            <IconButton $width={14} $height={20} $color="#3c4043" aria-label="关闭标签页">
              <MdClose size={17} />
            </IconButton>
          </BrowserTab>
        ))}
      </BrowserTabs>
      <IconButton $width={54} $height={43} $color="#3c4043" aria-label="新标签页">
        <MdAdd size={22} />
      </IconButton>
      <WindowControls>
        <IconButton $width={57} aria-label="搜索标签页">
          <Svg w={14} h={8} box="0 0 14 8"><path d="M1 1l6 6 6-6" stroke="#111" /></Svg>
        </IconButton>
        <IconButton $width={57} aria-label="最小化">
          <Svg w={14} h={14} box="0 0 14 14"><path d="M0 7.500h14" stroke="#000" /></Svg>
        </IconButton>
        <IconButton $width={57} aria-label="还原">
          <Svg w={14} h={14} box="0 0 14 14"><path d="M.5 3.500h10v10H.5zM3.500 3V.5h10v10H11" stroke="#000" /></Svg>
        </IconButton>
        <IconButton $width={57} aria-label="关闭">
          <Svg w={14} h={14} box="0 0 14 14"><path d="M.5.5l13 13M13.500.5l-13 13" stroke="#000" /></Svg>
        </IconButton>
      </WindowControls>
    </TabStrip>
    <Toolbar>
      <IconButton $color="#b8babd" aria-label="后退"><MdArrowBack size={23} /></IconButton>
      <IconButton $color="#b8babd" aria-label="前进"><MdArrowForward size={23} /></IconButton>
      <IconButton aria-label="刷新"><MdRefresh size={25} /></IconButton>
      <AddressBar>
        <MdLock size={16} color="#5f6368" />
        <Url><b>the-x.cn</b>/cryptography/Aes.aspx</Url>
        <IconButton aria-label="分享"><ShareIcon /></IconButton>
        <IconButton $color="#4285f4" aria-label="收藏"><MdStar size={22} /></IconButton>
      </AddressBar>
      <IconButton aria-label="扩展程序"><MdExtension size={21} /></IconButton>
      <IconButton aria-label="个人资料"><Avatar><MdPerson size={24} /></Avatar></IconButton>
      <IconButton aria-label="菜单"><MdMoreVert size={24} /></IconButton>
    </Toolbar>
    <BookmarkBar>
      {bookmarks.map((item) => (
        <Bookmark key={item.label} href="#" $width={item.width}>
          {item.icon}
          <span className="label">{item.label}</span>
        </Bookmark>
      ))}
      <ReadingList>
        <span>»</span>
        <i />
        <ReadingIcon />
        <span>阅读清单</span>
      </ReadingList>
    </BookmarkBar>
  </>
);

const OptionSelect = ({ name, value, bare }) => (
  <SelectWrap $bare={bare}>
    <Select aria-label={name} defaultValue={value} $bare={bare}>
      <option>{value}</option>
    </Select>
    <Chevron />
  </SelectWrap>
);

const AesPage = () => (
  <Page>
    <Brand>
      The
      <ToolsLogo />
    </Brand>
    <NavBar>
      {navItems.map((item) => (
        <NavLink key={item.label} href="#" $active={item.active}>
          {item.label}
          {item.menu && <Caret />}
        </NavLink>
      ))}
    </NavBar>
    <Intro>
      <h1>AES加密/解密</h1>
      <p>
        在线AES加密解密工具。AES采用对称分组密码体制，密钥长度支持为128/192/256bits。用户密钥长度不足时，平台将以0x00自动填充。IV也一样，自动填充，超出部分将被忽略。加密时会将明文数据按16byte进行分组，不足16byte时将用特
        <br />
        定的Padding（如PCKS7）字符进填充，所以不同的Padding方式密文最后一段可能不一样。如果没有特别指明平台将使用UTF<TextCursor />8编码处理数据（如KEY/IV）。本工具未作全面测试，如果发现问题请给予反馈。
      </p>
    </Intro>
    <CipherTabs>
      {ciphers.map((name) => (
        <CipherTab key={name} href="#" $active={name === 'AES'}>{name}</CipherTab>
      ))}
      <CollapseButton aria-label="收起">
        <Svg w={18} h={12} box="0 0 18 12">
          <path d="M1.500 9.500L9 3l7.500 6.500" stroke="#3c763d" strokeWidth="4.500" />
        </Svg>
      </CollapseButton>
    </CipherTabs>
    <Workspace>
      <InputPanel>
        <TextArea aria-label="输入" spellCheck={false} defaultValue="32313131313131313131313131313132" />
      </InputPanel>
      <Options>
        <FormatBox>
          <OptionSelect name="格式" value="Hex" bare />
        </FormatBox>
        <OptionList>
          {selects.map((item) => (
            <OptionSelect key={item.name} {...item} />
          ))}
          <KeyInput aria-label="密钥" defaultValue="1111111111111111" />
          <Actions>
            <ActionButton $bg="#5cb85c" $border="#4cae4c">加密</ActionButton>
            <ActionButton $bg="#f0ad4e" $border="#eea236">解密</ActionButton>
          </Actions>
        </OptionList>
      </Options>
      <OutputPanel>
        <TextArea $mono aria-label="输出" spellCheck={false} defaultValue={output} />
      </OutputPanel>
    </Workspace>
  </Page>
);

const SystemBar = () => (
  <Taskbar>
    <TaskGroup>
      {systemButtons.map((item) => (
        <TaskButton key={item.name} $width={60} aria-label={item.name}>{item.icon}</TaskButton>
      ))}
    </TaskGroup>
    <TaskGroup>
      {apps.map((item) => (
        <TaskButton key={item.name} $active={item.active} $open={item.open} aria-label={item.name}>
          {item.icon}
        </TaskButton>
      ))}
    </TaskGroup>
    <Tray>
      <Weather>
        <CloudIcon />
        <span>2°C&nbsp; 大雾</span>
      </Weather>
      <TrayIcon>
        <Svg w={16} h={10} box="0 0 16 10"><path d="M1 9l7-7 7 7" stroke="#fff" strokeWidth="1.500" /></Svg>
      </TrayIcon>
      <TrayIcon>
        <Svg w={17} h={17} box="0 0 17 17">
          <path d="M1 16C1 8 7 1 16 1M5 16C5 10 9 5 16 5M9 16c0-4 3-7 7-7" stroke="#c5cbd5" strokeWidth="1.300" />
          <circle cx="14.500" cy="14.500" r="1.800" fill="#fff" />
        </Svg>
      </TrayIcon>
      <TrayIcon>
        <Svg w={20} h={14} box="0 0 20 14">
          <path d="M6 1.500h12v11H4V8" stroke="#fff" strokeWidth="1.200" />
          <path d="M7.500 3.500h9v7H6z" fill="#fff" />
          <path d="M18 5h2v4h-2zM0 2h6v3L4 7H2L0 5zM1 0h1v2H1zM4 0h1v2H4z" fill="#fff" />
        </Svg>
      </TrayIcon>
      <TrayIcon>
        <Svg w={20} h={18} box="0 0 20 18">
          <path d="M1 6h3l4-4v14l-4-4H1z" stroke="#fff" strokeWidth="1.200" />
          <path d="M10.500 6.500q2 2.500 0 5" stroke="#fff" strokeWidth="1.200" />
          <path d="M13 4q4 5 0 10M16 2q5 7 0 14" stroke="#7f8898" strokeWidth="1.200" />
        </Svg>
      </TrayIcon>
      <TrayIcon>中</TrayIcon>
      <Clock>
        <span>9:25</span>
        <span>2021/11/24</span>
      </Clock>
      <Notifications>
        <Svg w={20} h={20} box="0 0 20 20">
          <path d="M0 0h20v16h-9l-4 4v-4H0z" fill="#fff" />
          <path d="M4 5h12M4 8.500h12M4 12h9" stroke="#1b2844" strokeWidth="1.300" />
        </Svg>
        <Badge>3</Badge>
      </Notifications>
      <ShowDesktop />
    </Tray>
  </Taskbar>
);

const App = () => (
  <Desktop>
    <GlobalStyle />
    <BrowserHeader />
    <Viewport>
      <AesPage />
      <Scrollbar>
        <ScrollArrow>
          <Svg w={10} h={6} box="0 0 10 6"><path d="M0 6l5-6 5 6z" fill="#a3a3a3" /></Svg>
        </ScrollArrow>
        <ScrollTrack><ScrollThumb /></ScrollTrack>
        <ScrollArrow>
          <Svg w={10} h={6} box="0 0 10 6"><path d="M0 0l5 6 5-6z" fill="#505050" /></Svg>
        </ScrollArrow>
      </Scrollbar>
    </Viewport>
    <SystemBar />
  </Desktop>
);

export default App;
